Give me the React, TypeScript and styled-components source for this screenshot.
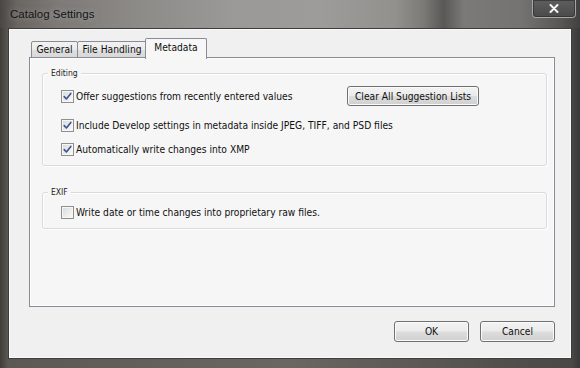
import React from "react";
import styled, { createGlobalStyle } from "styled-components";

const UI_FONT = `"DejaVu Sans Condensed", "Liberation Sans", Arial, sans-serif`;

const GlobalStyle = createGlobalStyle`
  html, body { margin: 0; padding: 0; background: #2e2c2a; }
  body { width: 580px; height: 368px; overflow: hidden; }
  * { box-sizing: border-box; }
`;

const Window = styled.div`
  width: 580px;
  height: 368px;
  display: flex;
  flex-direction: column;
  background: linear-gradient(180deg, #5d5a57 0px, #4f4c49 150px, #3a3836 320px, #222120 368px);
`;

const TitleBar = styled.div`
  height: 28px;
  flex: none;
  display: flex;
  align-items: flex-start;
  justify-content: space-between;
  padding: 0 8px;
  background: linear-gradient(90deg, #4a4643 0%, #6a6763 3%, #7d7a77 10%, #8e8c89 25%, #9b9997 40%, #9e9c9a 55%, #93918e 68%, #7c7a77 73%, #5a5856 76.5%, #7c7a78 80%, #757371 90%, #575553 97%, #42403e 100%);
`;

const Frame = styled.div`
  flex: 1;
  display: flex;
  padding: 0 8px 9px 8px;
  background: linear-gradient(90deg, #403c38 0%, #5c5854 1.4%, #6a6662 50%, #4a4846 98.6%, #3a3836 100%);
`;

const Title = styled.div`
  font-family: "Liberation Sans", Arial, sans-serif;
  font-size: 11.5px;
  line-height: 14px;
  color: #151515;
  padding: 7px 0 0 2px;
  text-shadow: 0 0 6px rgba(210, 210, 210, 0.5);
`;

const CloseButton = styled.div`
  width: 44px;
  height: 18px;
  margin-right: -4px;
  border: 1px solid rgba(210, 210, 210, 0.65);
  border-top: none;
  border-radius: 0 0 4px 4px;
  background: linear-gradient(180deg, #5e5e5e, #4a4a4a);
  box-shadow: inset 0 0 0 1px rgba(40,40,40,0.6);
  display: flex;
  align-items: center;
  justify-content: center;
`;

const Client = styled.div`
  flex: 1;
  display: flex;
  flex-direction: column;
  background: #f0f0f0;
  border: 1px solid #3d3d3d;
  box-shadow: inset 0 0 0 1px #fafafa;
  padding: 9px 16px 0 20px;
  font-family: ${UI_FONT};
  font-size: 10.2px;
  color: #111;
`;

const TabStrip = styled.div`
  display: flex;
  align-items: flex-end;
  height: 20px;
  padding-left: 2px;
  position: relative;
  z-index: 1;
`;

const Tab = styled.div<{ $w: number; $active?: boolean }>`
  width: ${(p) => p.$w}px;
  height: ${(p) => (p.$active ? 21 : 17)}px;
  margin-left: ${(p) => (p.$active ? -2 : -1)}px;
  margin-bottom: ${(p) => (p.$active ? -1 : 0)}px;
  border: 1px solid #898c95;
  border-bottom: ${(p) => (p.$active ? "none" : "1px solid #898c95")};
  border-radius: 2px 2px 0 0;
  background: ${(p) =>
    p.$active
      ? "#f7f7f7"
      : "linear-gradient(180deg, #f2f2f2 0%, #ebebeb 50%, #e0e0e0 51%, #d8d8d8 100%)"};
  display: flex;
  align-items: ${(p) => (p.$active ? "flex-start" : "center")};
  padding-top: ${(p) => (p.$active ? 3 : 0)}px;
  justify-content: center;
  white-space: nowrap;
  position: relative;
  z-index: ${(p) => (p.$active ? 2 : 1)};
  &:first-child { margin-left: 0; }
`;

const Panel = styled.div`
  height: 250px;
  margin-top: -1px;
  border: 1px solid #898c95;
  background: #f6f6f6;
  box-shadow: inset 0 0 0 1px #fdfdfd;
  padding: 15px 7px 0 12px;
  display: flex;
  flex-direction: column;
  gap: 26px;
`;

const Group = styled.div<{ $pt: number }>`
  position: relative;
  border: 1px solid #d9dadc;
  border-radius: 3px;
  box-shadow: 1px 1px 0 #ffffff, inset 1px 1px 0 #ffffff;
  padding: ${(p) => p.$pt}px 10px 8px 18px;
  display: flex;
  flex-direction: column;
`;

const Legend = styled.span`
  position: absolute;
  top: -6px;
  left: 5px;
  padding: 0 3px;
  background: #f6f6f6;
  font-size: 8.5px;
  line-height: 11px;
  color: #222;
`;

const Row = styled.div<{ $h: number; $mt?: number }>`
  height: ${(p) => p.$h}px;
  margin-top: ${(p) => p.$mt ?? 0}px;
  display: flex;
  align-items: center;
`;

const ButtonRow = styled.div`
  height: 20px;
  display: grid;
  grid-template-columns: 286px 132px;
  align-items: center;
`;

const CheckLabel = styled.label`
  display: flex;
  align-items: center;
  gap: 2px;
  white-space: nowrap;
  line-height: 13px;
`;

const Box = styled.span`
  width: 13px;
  height: 13px;
  border: 1px solid #8e8f8f;
  background: linear-gradient(135deg, #d6d8dc 0%, #eeeeee 60%, #fbfbfb 100%);
  box-shadow: inset 0 0 0 1px #f6f6f6;
  display: inline-flex;
  align-items: center;
  justify-content: center;
  flex: none;
`;

const Button = styled.button<{ $w: number; $h?: number }>`
  width: ${(p) => p.$w}px;
  height: ${(p) => p.$h ?? 21}px;
  padding: 0;
  border: 1px solid #707070;
  border-radius: 3px;
  background: linear-gradient(180deg, #f3f3f3 0%, #ebebeb 48%, #dddddd 52%, #d0d0d0 100%);
  box-shadow: inset 0 0 0 1px #fbfbfb;
  font-family: ${UI_FONT};
  font-size: 10.2px;
  color: #111;
`;

const Footer = styled.div`
  margin-top: 14px;
  display: flex;
  justify-content: flex-end;
  gap: 11px;
`;

function Check({ checked }: { checked: boolean }) {
  return (
    <Box>
      {checked && (
        <svg width="9" height="9" viewBox="0 0 9 9">
          <path d="M1.2 4.6 L3.4 7 L7.8 1.4" fill="none" stroke="#3b5590" strokeWidth="1.6" strokeLinecap="round" strokeLinejoin="round" />
        </svg>
      )}
    </Box>
  );
}

function CheckItem({ checked, children }: { checked: boolean; children: React.ReactNode }) {
  return (
    <CheckLabel>
      <Check checked={checked} />
      <span>{children}</span>
    </CheckLabel>
  );
}

export default function App() {
  return (
    <>
      <GlobalStyle />
      <Window>
        <TitleBar>
          <Title>Catalog Settings</Title>
          <CloseButton>
            <svg width="10" height="9" viewBox="0 0 10 9">
              <path d="M1.5 1 L8.5 8 M8.5 1 L1.5 8" stroke="#f4f4f4" strokeWidth="2" strokeLinecap="round" />
            </svg>
          </CloseButton>
        </TitleBar>
        <Frame>
          <Client>
            <TabStrip>
              <Tab $w={47}>General</Tab>
              <Tab $w={70}>File Handling</Tab>
              <Tab $w={62} $active>Metadata</Tab>
            </TabStrip>
            <Panel>
              <Group $pt={12}>
                <Legend>Editing</Legend>
                <ButtonRow>
                  <CheckItem checked>Offer suggestions from recently entered values</CheckItem>
                  <Button $w={132} $h={20}>Clear All Suggestion Lists</Button>
                </ButtonRow>
                <Row $h={16} $mt={11}>
                  <CheckItem checked>Include Develop settings in metadata inside JPEG, TIFF, and PSD files</CheckItem>
                </Row>
                <Row $h={16} $mt={8}>
                  <CheckItem checked>Automatically write changes into XMP</CheckItem>
                </Row>
              </Group>
              <Group $pt={11}>
                <Legend>EXIF</Legend>
                <Row $h={16}>
                  <CheckItem checked={false}>Write date or time changes into proprietary raw files.</CheckItem>
                </Row>
              </Group>
            </Panel>
            <Footer>
              <Button $w={75}>OK</Button>
              <Button $w={75}>Cancel</Button>
            </Footer>
          </Client>
        </Frame>
      </Window>
    </>
  );
}
